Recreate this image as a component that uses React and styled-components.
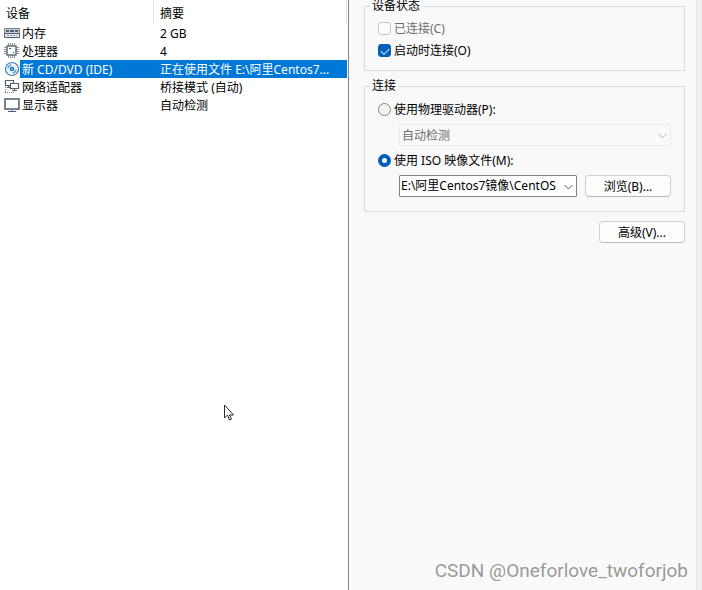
import React, { useState } from 'react';
import styled, { createGlobalStyle } from 'styled-components';

const colors = {
  accent: '#0078d7',
  control: '#005fb8',
  steel: '#4b6075',
  panel: '#f9f9f9',
  line: '#dcdcdc',
  muted: '#6d6d6d',
};

const GlobalStyle = createGlobalStyle`
  * { box-sizing: border-box; }
  body {
    margin: 0;
    background: white;
    color: black;
    font-family: "Noto Sans", "Noto Sans CJK SC", sans-serif;
    font-size: 12px;
    line-height: 18px;
  }
  button, select, input { font: inherit; color: inherit; margin: 0; }
`;

const Page = styled.main`
  position: relative;
  display: grid;
  grid-template-columns: minmax(0, 349fr) minmax(0, 347fr) 6px;
  min-height: 100vh;
  overflow: hidden;
`;

const DevicePane = styled.section`
  border-right: 1px solid #828790;
  padding-right: 1px;
`;

const DeviceTable = styled.table`
  width: 100%;
  table-layout: fixed;
  border-collapse: separate;
  border-spacing: 0;
`;

const Head = styled.th`
  width: ${(p) => p.$width || 'auto'};
  height: 24px;
  padding: 4px 6px 0;
  border-right: 1px solid #e5e5e5;
  font-weight: normal;
  line-height: 16px;
  text-align: left;
`;

const Cell = styled.td`
  height: 18px;
  padding: 0;
`;

const Device = styled.div`
  display: flex;
  padding-left: 4px;
`;

const Label = styled.span`
  display: block;
  flex: 1;
  height: 18px;
  padding: 1px ${(p) => (p.$summary ? '14px' : '0')} 0 ${(p) => (p.$summary ? '6px' : '2px')};
  overflow: hidden;
  white-space: nowrap;
  text-overflow: ellipsis;
  background: ${(p) => (p.$selected ? colors.accent : 'transparent')};
  color: ${(p) => (p.$selected ? 'white' : 'black')};
`;

const Glyph = styled.svg.attrs({ width: 16, height: 16, viewBox: '0 0 16 16', fill: 'none' })`
  flex: none;
  margin-top: 1px;
`;

const Settings = styled.form`
  display: flex;
  flex-direction: column;
  gap: 9px;
  padding: 0 11px 0 15px;
  background: ${colors.panel};
`;

const Gutter = styled.div`
  background: #f0f0f0;
  border-left: 1px solid #e5e5e5;
`;

const Group = styled.fieldset`
  min-width: 0;
  margin: 0;
  padding: ${(p) => p.$top} 13px ${(p) => p.$bottom};
  border: 1px solid ${colors.line};
`;

const Legend = styled.legend`
  margin-left: -8px;
  padding: 0 2px;
  line-height: 12px;
`;

const Option = styled.label`
  display: flex;
  align-items: center;
  gap: 3px;
  height: 22px;
  color: ${(p) => (p.$disabled ? colors.muted : 'black')};
`;

const OptionText = styled.span`
  padding-top: 1px;
`;

const Check = styled.input.attrs({ type: 'checkbox' })`
  appearance: none;
  display: block;
  width: 13px;
  height: 13px;
  border: 1px solid #c5c5c5;
  border-radius: 3px;
  background: #fbfbfb;

  &:checked {
    border-color: ${colors.control};
    background: ${colors.control};
  }
  &:checked::before {
    content: '';
    display: block;
    width: 7px;
    height: 4px;
    margin: 3px 2px;
    border: solid #d5e5f5;
    border-width: 0 0 1px 1px;
    transform: rotate(-45deg);
  }
`;

const Radio = styled.input.attrs({ type: 'radio' })`
  appearance: none;
  width: 13px;
  height: 13px;
  border: 1px solid #858585;
  border-radius: 50%;
  background: #f3f3f3;

  &:checked {
    border: 4px solid ${colors.control};
    background: white;
  }
`;

const SourceRow = styled.div`
  display: flex;
  gap: 8px;
  margin: ${(p) => p.$margin};
  padding-left: 21px;
`;

const Combo = styled.div`
  position: relative;
  flex: 1;
  min-width: 0;
`;

const Select = styled.select`
  display: block;
  appearance: none;
  width: 100%;
  height: 22px;
  padding: 0 17px 0 1px;
  border: 1px solid #828282;
  border-radius: 1px;
  background: white;
  overflow: hidden;

  &:disabled {
    padding: 2px 17px 0 2px;
    border-color: #ebebeb;
    background: ${colors.panel};
    color: ${colors.muted};
    opacity: 1;
  }
`;

const Arrow = styled.svg.attrs({ width: 9, height: 6, viewBox: '0 0 9 6', fill: 'none' })`
  position: absolute;
  top: 9px;
  right: 4px;
  stroke: ${(p) => (p.$disabled ? '#b5b5b5' : '#606060')};
  pointer-events: none;
`;

const PushButton = styled.button.attrs({ type: 'button' })`
  flex: none;
  width: 86px;
  height: 22px;
  padding: 2px 0 0;
  border: 1px solid #d0d0d0;
  border-bottom-color: #bababa;
  border-radius: 4px;
  background: #fdfdfd;
  line-height: 18px;
`;

const Advanced = styled(PushButton)`
  align-self: flex-end;
`;

const Pointer = styled.svg`
  position: absolute;
  left: 224px;
  top: 404px;
`;

const Watermark = styled.div`
  position: absolute;
  right: 14px;
  bottom: 7px;
  color: #999;
  font-family: Roboto, "Liberation Sans", sans-serif;
  font-size: 19px;
  line-height: 24px;
  white-space: nowrap;
  text-shadow: 1px 1px 0 white;
`;

const MemoryIcon = () => (
  <Glyph aria-hidden="true">
    <path d="M.5 3.5h15v5H.5z" fill="#c9d0d6" stroke="#71808e" />
    <path d="M2 5h3v2H2zM6 5h4v2H6zM11 5h3v2h-3z" fill={colors.steel} />
    <path d="M.5 8.5h15v4H.5z" fill="#e4e9ed" stroke={colors.steel} />
    <path d="M3 10.5h10" stroke="#8b98a4" strokeDasharray="2 1" />
  </Glyph>
);

const CpuIcon = () => (
  <Glyph aria-hidden="true">
    <path d="M4.5 0v3M6.5 0v3M8.5 0v3M10.5 0v3M4.5 12v3M6.5 12v3M8.5 12v3M10.5 12v3M0 4.5h3M0 6.5h3M0 8.5h3M0 10.5h3M12 4.5h3M12 6.5h3M12 8.5h3M12 10.5h3" stroke="#8b949c" />
    <path d="M3 3h9v9H3z" fill="white" stroke="#65717c" strokeWidth="1.5" />
    <path d="M5 5h2v1H5zM9 9h1v1H9z" fill={colors.steel} />
  </Glyph>
);

const DiscIcon = () => (
  <Glyph aria-hidden="true">
    <circle cx="8" cy="8" r="6.5" fill="#edf6fc" stroke="#427fae" strokeWidth="1.2" />
    <path d="M4 7.5A4 4 0 0 1 7.5 4M8.5 12A4 4 0 0 0 12 8.5" stroke="#69a8d5" strokeWidth="1.5" />
    <circle cx="8" cy="8" r="1.5" fill="white" stroke="#1674b8" strokeWidth="1.5" />
  </Glyph>
);

const NetworkIcon = () => (
  <Glyph aria-hidden="true">
    <path d="M1.5 1.5h8v5h-8zM4.5 7v1M3 8.5h3" stroke={colors.steel} strokeWidth="1.2" />
    <path d="M6.5 4.5h8v5h-8z" fill="white" stroke={colors.steel} strokeWidth="1.2" />
    <path d="M10.5 10v1M8 11.5h5" stroke={colors.steel} />
    <path d="M1.5 8v6M1 13.5h10" stroke="#788490" strokeDasharray="1 1" />
  </Glyph>
);

const DisplayIcon = () => (
  <Glyph aria-hidden="true">
    <path d="M1 2h14v10H1z" fill="white" stroke={colors.steel} strokeWidth="1.5" />
    <path d="M8 13v1M4 14.5h8" stroke={colors.steel} />
  </Glyph>
);

const devices = [
  { name: '内存', summary: '2 GB', Icon: MemoryIcon },
  { name: '处理器', summary: '4', Icon: CpuIcon },
  { name: '新 CD/DVD (IDE)', summary: '正在使用文件 E:\\阿里Centos7...', Icon: DiscIcon, selected: true },
  { name: '网络适配器', summary: '桥接模式 (自动)', Icon: NetworkIcon },
  { name: '显示器', summary: '自动检测', Icon: DisplayIcon },
];

const ComboBox = ({ label, value, disabled }) => (
  <Combo>
    <Select aria-label={label} disabled={disabled}>
      <option>{value}</option>
    </Select>
    <Arrow $disabled={disabled} aria-hidden="true">
      <path d="M.5 1l4 4 4-4" />
    </Arrow>
  </Combo>
);

const App = () => {
  const [source, setSource] = useState('iso');

  return (
    <>
      <GlobalStyle />
      <Page>
        <DevicePane>
          <DeviceTable>
            <thead>
              <tr>
                <Head $width="44.4%">设备</Head>
                <Head>摘要</Head>
              </tr>
            </thead>
            <tbody>
              {devices.map(({ name, summary, Icon, selected }) => (
                <tr key={name} aria-selected={!!selected}>
                  <Cell>
                    <Device>
                      <Icon />
                      <Label $selected={selected}>{name}</Label>
                    </Device>
                  </Cell>
                  <Cell>
                    <Label $summary $selected={selected}>{summary}</Label>
                  </Cell>
                </tr>
              ))}
            </tbody>
          </DeviceTable>
        </DevicePane>

        <Settings>
          <Group $top="5px" $bottom="9px">
            <Legend>设备状态</Legend>
            <Option $disabled>
              <Check disabled />
              <OptionText>已连接(C)</OptionText>
            </Option>
            <Option>
              <Check defaultChecked />
              <OptionText>启动时连接(O)</OptionText>
            </Option>
          </Group>

          <Group $top="6px" $bottom="14px">
            <Legend>连接</Legend>
            <Option>
              <Radio name="source" checked={source === 'drive'} onChange={() => setSource('drive')} />
              <OptionText>使用物理驱动器(P):</OptionText>
            </Option>
            <SourceRow $margin="4px 0 3px">
              <ComboBox label="物理驱动器" value="自动检测" disabled={source !== 'drive'} />
            </SourceRow>
            <Option>
              <Radio name="source" checked={source === 'iso'} onChange={() => setSource('iso')} />
              <OptionText>使用 ISO 映像文件(M):</OptionText>
            </Option>
            <SourceRow $margin="4px 0 0">
              <ComboBox label="ISO 映像文件" value="E:\阿里Centos7镜像\CentOS" disabled={source !== 'iso'} />
              <PushButton>浏览(B)...</PushButton>
            </SourceRow>
          </Group>

          <Advanced>高级(V)...</Advanced>
        </Settings>
        <Gutter />

        <Pointer width="12" height="18" viewBox="0 0 12 18" aria-hidden="true">
          <path d="M.5 1v13l3-3 2 5 2-1-2-4h4z" fill="white" stroke="#29293a" />
        </Pointer>
        <Watermark>CSDN @Oneforlove_twoforjob</Watermark>
      </Page>
    </>
  );
};

export default App;
